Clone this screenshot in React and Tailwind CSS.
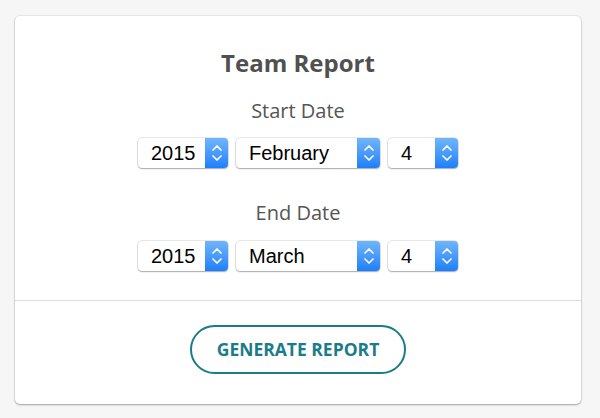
import React from 'react';

function Stepper() {
  return (
    <div className="flex h-full w-[23px] items-center justify-center rounded-r-[4px] bg-gradient-to-b from-[#6fb5fb] to-[#1b7ffb]">
      <svg width="12" height="20" viewBox="0 0 12 20" fill="none" stroke="white" strokeWidth="1.7" strokeLinecap="round" strokeLinejoin="round">
        <path d="M2 7 L6 3 L10 7" />
        <path d="M2 13 L6 17 L10 13" />
      </svg>
    </div>
  );
}

function Select({ value, width }) {
  return (
    <div
      className={`flex h-[30px] ${width} items-stretch rounded-[4px] bg-white shadow-[0_0_0_0.5px_rgba(0,0,0,0.18),0_1px_1.5px_rgba(0,0,0,0.28)]`}
    >
      <span className="flex flex-1 items-center pl-[13px] text-[20px] text-black [font-family:'Liberation_Sans',Arial,sans-serif]">
        {value}
      </span>
      <Stepper />
    </div>
  );
}

function DateRow({ year, month, day }) {
  return (
    <div className="flex justify-center gap-[8px]">
      <Select value={year} width="w-[90px]" />
      <Select value={month} width="w-[144px]" />
      <Select value={day} width="w-[70px]" />
    </div>
  );
}

export default function App() {
  return (
    <div className="min-h-[418px] bg-[#f6f6f6] px-[15px] pt-[16px] [font-family:'Open_Sans',sans-serif]">
      <div className="w-[566px] rounded-[5px] bg-white shadow-[0_0_0_1px_rgba(0,0,0,0.05),0_1px_2px_rgba(0,0,0,0.3)]">
        {/* Date pickers */}
        <div className="flex flex-col items-center pt-[31px] pb-[29px]">
          <h1 className="text-[24px] font-bold leading-[32px] text-[#505050]">Team Report</h1>
          <p className="mt-[19px] text-[20px] leading-[26px] text-[#555555]">Start Date</p>
          <div className="mt-[14px]">
            <DateRow year="2015" month="February" day="4" />
          </div>
          <p className="mt-[32px] text-[20px] leading-[26px] text-[#555555]">End Date</p>
          <div className="mt-[15px]">
            <DateRow year="2015" month="March" day="4" />
          </div>
        </div>

        {/* Footer */}
        <div className="flex justify-center border-t border-[#dcdcdc] pt-[24px] pb-[30px]">
          <button className="h-[49px] w-[216px] rounded-full border-[2.5px] border-[#1a7c88] text-[17.5px] font-bold text-[#1a7c88]">
            GENERATE REPORT
          </button>
        </div>
      </div>
    </div>
  );
}
